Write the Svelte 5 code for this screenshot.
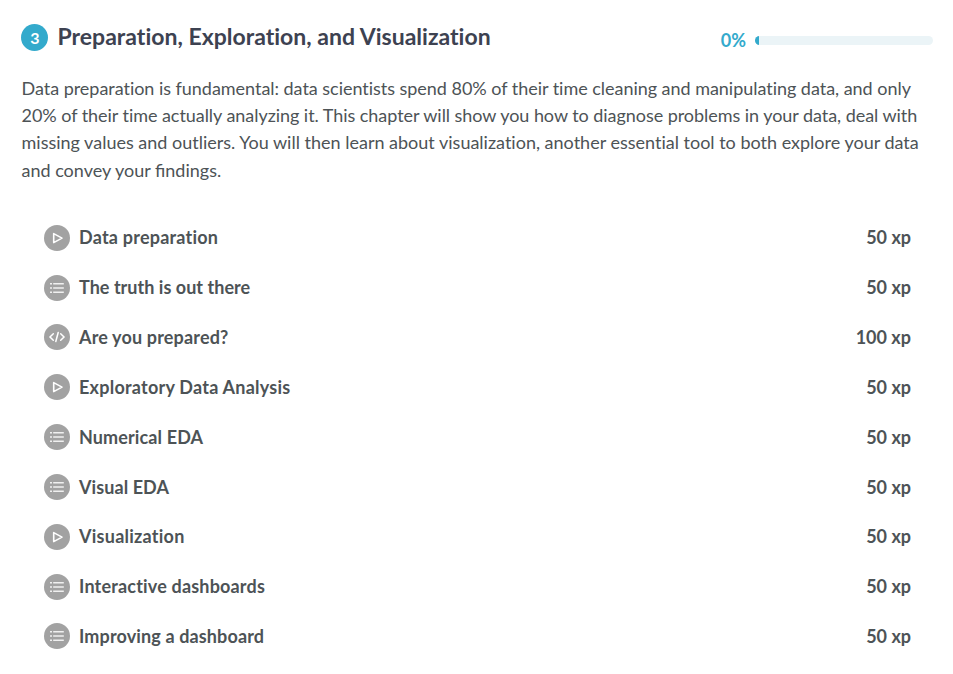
<script>
  const lessons = [
    ['video', 'Data preparation', 50, 0.22],
    ['list', 'The truth is out there', 50, 0.03],
    ['code', 'Are you prepared?', 100, 0.16],
    ['video', 'Exploratory Data Analysis', 50, 0.235],
    ['list', 'Numerical EDA', 50, 0.12],
    ['list', 'Visual EDA', 50, 0.08],
    ['video', 'Visualization', 50, 0.25],
    ['list', 'Interactive dashboards', 50, 0.18],
    ['list', 'Improving a dashboard', 50, 0.13],
  ];
  const lines = [
    ['Data preparation is fundamental: data scientists spend 80% of their time cleaning and manipulating data, and only', -0.031],
    ['20% of their time actually analyzing it. This chapter will show you how to diagnose problems in your data, deal with', -0.048],
    ['missing values and outliers. You will then learn about visualization, another essential tool to both explore your data', 0],
    ['and convey your findings.', 0],
  ];
</script>

<main>
  <header>
    <span class="num">3</span>
    <h1>Preparation, Exploration, and Visualization</h1>
    <div class="progress">
      <span class="pct">0%</span>
      <span class="track"><span class="fill"></span></span>
    </div>
  </header>
  <p>{#each lines as [line, tracking]}<span style:letter-spacing="{tracking}px">{line}</span>{/each}</p>
  <ul>
    {#each lessons as [kind, title, xp, tracking]}
      <li>
        <svg width="26" height="26" viewBox="0 0 26 26" fill="none" stroke="#fff">
          <circle cx="13" cy="13" r="13" fill="#a2a2a2" stroke="none" />
          {#if kind === 'video'}
            <path d="M9.7 8.6v9l8.3-4.5z" stroke-width="1.6" stroke-linejoin="round" />
          {:else if kind === 'list'}
            <path d="M6 8.7h2M6 13h2M6 17.3h2M9.2 8.7h10.6M9.2 13h10.6M9.2 17.3h10.6" stroke-width="1.5" stroke="#f0f0f0" />
          {:else}
            <path d="M9.3 9.8L6 13l3.3 3.2M16.7 9.8L20 13l-3.3 3.2M14.2 8.5l-2.4 9" stroke-width="1.5" stroke-linecap="round" />
          {/if}
        </svg>
        <span class="title" style:letter-spacing="{tracking}px">{title}</span>
        <span class="xp">{xp} xp</span>
      </li>
    {/each}
  </ul>
</main>

<style>
  :global(body) { margin: 0; background: #fff; }
  main { box-sizing: border-box; width: 953px; height: 674px; overflow: hidden; padding: 23px 20px 0 21px; font-family: Lato, sans-serif; color: #4d5356; font-variant-ligatures: no-common-ligatures; }
  header { display: flex; align-items: center; height: 28px; }
  .num { box-sizing: border-box; width: 27px; height: 27px; padding-left: 1px; border-radius: 50%; background: #33aacc; color: #fff; font-size: 16px; line-height: 27px; text-align: center; font-weight: 700; }
  h1 { margin: 0 0 2px 9.5px; font-size: 23px; line-height: 28px; font-weight: 700; color: #3d4251; letter-spacing: 0.01px; white-space: nowrap; }
  .progress { display: flex; align-items: center; margin-left: auto; padding-top: 7px; }
  .pct { color: #33aacc; font-size: 18px; font-weight: 700; line-height: 20px; margin: 0 9px 1px 0; }
  .track { width: 178px; height: 9px; border-radius: 5px; background: #ebf4f7; overflow: hidden; }
  .fill { display: block; width: 4px; height: 9px; background: #33aacc; }
  p { margin: 24px 0 0 0.5px; font-size: 18px; line-height: 27.2px; }
  p span { display: block; white-space: nowrap; }
  p span:last-child { font-variant-ligatures: normal; }
  ul { list-style: none; margin: 28.65px 0 0; padding: 0 22px 0 23px; }
  li { display: flex; align-items: center; height: 49.85px; }
  svg { margin-top: 0.7px; }
  .title { margin-left: 9px; }
  .title, .xp { font-size: 18px; line-height: 26px; font-weight: 700; white-space: nowrap; }
  .xp { margin-left: auto; }
</style>
